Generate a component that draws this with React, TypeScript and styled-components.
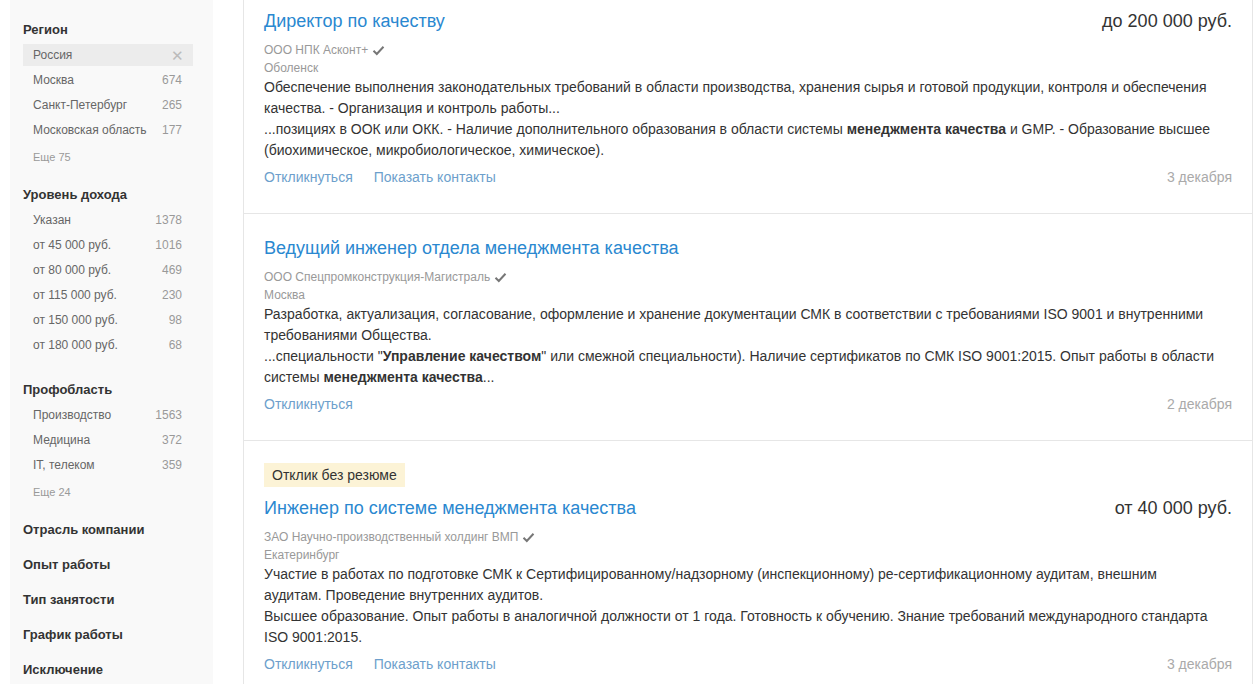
import React, { FC } from 'react';
import styled, { createGlobalStyle } from 'styled-components';

const GlobalStyle = createGlobalStyle`
    html, body {
        margin: 0;
        padding: 0;
        background: #fff;
        font-family: "Liberation Sans", Arial, sans-serif;
        color: #333;
        overflow: hidden;
    }
`;

export const Page = styled.div`
    display: flex;
    align-items: stretch;
    height: 684px;
    padding-left: 10px;
    padding-right: 3px;
    box-sizing: border-box;
`;

export const Sidebar = styled.aside`
    flex: 0 0 203px;
    background: #f9f9f9;
    padding: 21px 20px 0 13px;
    box-sizing: border-box;
`;

export const Section = styled.div<{ $tail?: boolean }>`
    margin-bottom: ${p => (p.$tail ? 25 : 19)}px;
`;

export const SectionTitle = styled.div`
    font-size: 13px;
    font-weight: bold;
    line-height: 18px;
    color: #333;
    margin-bottom: 5px;
`;

export const CollapsedTitle = styled(SectionTitle)`
    margin-bottom: 17px;
`;

export const FilterRow = styled.div<{ $selected?: boolean }>`
    display: flex;
    justify-content: space-between;
    align-items: center;
    height: 22px;
    margin-bottom: 3px;
    padding: 0 11px 0 10px;
    font-size: 12px;
    color: #666;
    background: ${p => (p.$selected ? '#ececec' : 'transparent')};
`;

export const Count = styled.span`
    color: #999;
`;

export const Close = styled.span`
    color: #bbb;
    font-size: 15px;
    line-height: 1;
    margin-right: -2px;
`;

export const MoreLink = styled.div`
    font-size: 11px;
    line-height: 20px;
    margin-top: 6px;
    padding-left: 10px;
    color: #999;
`;

export const Main = styled.main`
    flex: 1;
    margin-left: 30px;
    border-left: 1px solid #e6e6e6;
    border-right: 1px solid #e6e6e6;
    overflow: hidden;
`;

export const List = styled.div`
    margin-top: -13px;
`;

export const Card = styled.article`
    padding: 22px 20px 26px 20px;
    border-bottom: 1px solid #e6e6e6;
`;

export const Badge = styled.span`
    display: inline-block;
    height: 24px;
    line-height: 24px;
    padding: 0 8px;
    font-size: 14px;
    color: #333;
    background: #fcf3d6;
    margin-bottom: 9px;
`;

export const Head = styled.div`
    display: flex;
    justify-content: space-between;
    align-items: baseline;
`;

export const Title = styled.a`
    font-size: 18px;
    line-height: 24px;
    color: #2a88d0;
    text-decoration: none;
`;

export const Salary = styled.div`
    font-size: 18px;
    line-height: 24px;
    color: #333;
`;

export const Company = styled.div`
    margin-top: 8px;
    font-size: 12px;
    line-height: 18px;
    color: #999;
    display: flex;
    align-items: center;
    gap: 4px;
`;

export const City = styled.div`
    font-size: 12px;
    line-height: 18px;
    color: #999;
`;

export const Snippet = styled.p`
    margin: 0;
    font-size: 14px;
    line-height: 21px;
    color: #333;
    b {
        font-weight: bold;
    }
`;

export const Footer = styled.div`
    display: flex;
    justify-content: space-between;
    align-items: center;
    margin-top: 6px;
    font-size: 14px;
    line-height: 20px;
`;

export const Actions = styled.div`
    display: flex;
    gap: 21px;
`;

export const Action = styled.a`
    color: #6d9fcc;
    text-decoration: none;
`;

export const DateText = styled.span`
    color: #aaa;
`;

const Check: FC = () => (
    <svg width="13" height="11" viewBox="0 0 13 11">
        <path d="M1.5 5.8 L4.8 9 L11.5 1.8" fill="none" stroke="#777" strokeWidth="2" />
    </svg>
);

type Item = { name: string; count?: string; selected?: boolean };

const region: Item[] = [
    { name: 'Россия', selected: true },
    { name: 'Москва', count: '674' },
    { name: 'Санкт-Петербург', count: '265' },
    { name: 'Московская область', count: '177' },
];

const income: Item[] = [
    { name: 'Указан', count: '1378' },
    { name: 'от 45 000 руб.', count: '1016' },
    { name: 'от 80 000 руб.', count: '469' },
    { name: 'от 115 000 руб.', count: '230' },
    { name: 'от 150 000 руб.', count: '98' },
    { name: 'от 180 000 руб.', count: '68' },
];

const prof: Item[] = [
    { name: 'Производство', count: '1563' },
    { name: 'Медицина', count: '372' },
    { name: 'IT, телеком', count: '359' },
];

const collapsed = ['Отрасль компании', 'Опыт работы', 'Тип занятости', 'График работы', 'Исключение'];

const Rows: FC<{ items: Item[] }> = ({ items }) => (
    <>
        {items.map(it => (
            <FilterRow key={it.name} $selected={it.selected}>
                <span>{it.name}</span>
                {it.selected ? <Close>✕</Close> : <Count>{it.count}</Count>}
            </FilterRow>
        ))}
    </>
);

type Vacancy = {
    badge?: string;
    title: string;
    salary?: string;
    company: string;
    city: string;
    text: React.ReactNode;
    contacts: boolean;
    date: string;
};

const vacancies: Vacancy[] = [
    {
        title: 'Директор по качеству',
        salary: 'до 200 000 руб.',
        company: 'ООО НПК Асконт+',
        city: 'Оболенск',
        text: (
            <>
                Обеспечение выполнения законодательных требований в области производства, хранения сырья и готовой продукции, контроля и обеспечения качества. - Организация и контроль работы...
                <br />
                ...позициях в ООК или ОКК. - Наличие дополнительного образования в области системы <b>менеджмента качества</b> и GMP. - Образование высшее (биохимическое, микробиологическое, химическое).
            </>
        ),
        contacts: true,
        date: '3 декабря',
    },
    {
        title: 'Ведущий инженер отдела менеджмента качества',
        company: 'ООО Спецпромконструкция-Магистраль',
        city: 'Москва',
        text: (
            <>
                Разработка, актуализация, согласование, оформление и хранение документации СМК в соответствии с требованиями ISO 9001 и внутренними требованиями Общества.
                <br />
                ...специальности "<b>Управление качеством</b>" или смежной специальности). Наличие сертификатов по СМК ISO 9001:2015. Опыт работы в области системы <b>менеджмента качества</b>...
            </>
        ),
        contacts: false,
        date: '2 декабря',
    },
    {
        badge: 'Отклик без резюме',
        title: 'Инженер по системе менеджмента качества',
        salary: 'от 40 000 руб.',
        company: 'ЗАО Научно-производственный холдинг ВМП',
        city: 'Екатеринбург',
        text: (
            <>
                Участие в работах по подготовке СМК к Сертифицированному/надзорному (инспекционному) ре-сертификационному аудитам, внешним
                <br />
                аудитам. Проведение внутренних аудитов.
                <br />
                Высшее образование. Опыт работы в аналогичной должности от 1 года. Готовность к обучению. Знание требований международного стандарта ISO 9001:2015.
            </>
        ),
        contacts: true,
        date: '3 декабря',
    },
];

const App: FC = () => (
    <>
        <GlobalStyle />
        <Page>
            <Sidebar>
                <Section>
                    <SectionTitle>Регион</SectionTitle>
                    <Rows items={region} />
                    <MoreLink>Еще 75</MoreLink>
                </Section>
                <Section $tail>
                    <SectionTitle>Уровень дохода</SectionTitle>
                    <Rows items={income} />
                </Section>
                <Section>
                    <SectionTitle>Профобласть</SectionTitle>
                    <Rows items={prof} />
                    <MoreLink>Еще 24</MoreLink>
                </Section>
                {collapsed.map(t => (
                    <CollapsedTitle key={t}>{t}</CollapsedTitle>
                ))}
            </Sidebar>

            <Main>
                <List>
                    {vacancies.map(v => (
                        <Card key={v.title}>
                            {v.badge && <Badge>{v.badge}</Badge>}
                            <Head>
                                <Title href="#">{v.title}</Title>
                                {v.salary && <Salary>{v.salary}</Salary>}
                            </Head>
                            <Company>
                                {v.company}
                                <Check />
                            </Company>
                            <City>{v.city}</City>
                            <Snippet>{v.text}</Snippet>
                            <Footer>
                                <Actions>
                                    <Action href="#">Откликнуться</Action>
                                    {v.contacts && <Action href="#">Показать контакты</Action>}
                                </Actions>
                                <DateText>{v.date}</DateText>
                            </Footer>
                        </Card>
                    ))}
                </List>
            </Main>
        </Page>
    </>
);

export default App;
